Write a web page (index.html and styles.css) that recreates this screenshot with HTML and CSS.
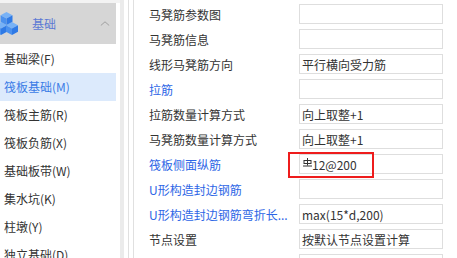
FILE: index.html
```html
<!DOCTYPE html>
<html lang="zh-CN">
<head>
<meta charset="utf-8">
<title>筏板基础</title>
<link rel="stylesheet" href="styles.css">
</head>
<body>
<div class="app">
  <aside class="sidebar">
    <div class="group-header">
      <svg class="group-icon" viewBox="0 0 18 23" aria-hidden="true">
        <g>
          <polygon class="c-top" points="1,10 7,13.2 1,16.4 -5,13.2"/>
          <polygon class="c-left" points="-5,13.2 1,16.4 1,23 -5,19.8"/>
          <polygon class="c-right" points="1,16.4 7,13.2 7,19.8 1,23"/>
        </g>
        <g>
          <polygon class="c-top" points="12,10 18,13.2 12,16.4 6,13.2"/>
          <polygon class="c-left" points="6,13.2 12,16.4 12,23 6,19.8"/>
          <polygon class="c-right" points="12,16.4 18,13.2 18,19.8 12,23"/>
        </g>
        <g>
          <polygon class="c-top" points="6.5,0 12.5,3.2 6.5,6.4 0.5,3.2"/>
          <polygon class="c-left" points="0.5,3.2 6.5,6.4 6.5,13 0.5,9.8"/>
          <polygon class="c-right" points="6.5,6.4 12.5,3.2 12.5,9.8 6.5,13"/>
        </g>
      </svg>
      <span class="group-title">基础</span>
      <svg class="chevron" viewBox="0 0 10 5" aria-hidden="true">
        <polyline points="0.8,4.5 5,0.8 9.2,4.5"/>
      </svg>
    </div>
    <ul class="nav">
      <li>基础梁(F)</li>
      <li class="active">筏板基础(M)</li>
      <li>筏板主筋(R)</li>
      <li>筏板负筋(X)</li>
      <li>基础板带(W)</li>
      <li>集水坑(K)</li>
      <li>柱墩(Y)</li>
      <li>独立基础(D)</li>
    </ul>
  </aside>
  <div class="track"></div>
  <main class="panel">
    <div class="props">
      <div class="row"><span class="label">马凳筋参数图</span><span class="value"></span></div>
      <div class="row"><span class="label">马凳筋信息</span><span class="value"></span></div>
      <div class="row"><span class="label">线形马凳筋方向</span><span class="value">平行横向受力筋</span></div>
      <div class="row"><span class="label link">拉筋</span><span class="value"></span></div>
      <div class="row"><span class="label">拉筋数量计算方式</span><span class="value">向上取整+1</span></div>
      <div class="row"><span class="label">马凳筋数量计算方式</span><span class="value">向上取整+1</span></div>
      <div class="row"><span class="label link">筏板侧面纵筋</span><span class="value"><svg class="rebar" viewBox="0 0 10 9" aria-hidden="true"><line x1="5.5" y1="0" x2="5.5" y2="7.5"/><rect x="2" y="2.5" width="7" height="3"/><line x1="1" y1="8" x2="10" y2="8"/></svg>12@200</span></div>
      <div class="row"><span class="label link">U形构造封边钢筋</span><span class="value"></span></div>
      <div class="row"><span class="label link">U形构造封边钢筋弯折长...</span><span class="value">max(15*d,200)</span></div>
      <div class="row"><span class="label">节点设置</span><span class="value">按默认节点设置计算</span></div>
      <div class="row"><span class="label"></span><span class="value"></span></div>
    </div>
  </main>
</div>
<div class="highlight"></div>
</body>
</html>
```
FILE: styles.css
```css
html, body {
  margin: 0;
  padding: 0;
}

body {
  width: 457px;
  height: 258px;
  overflow: hidden;
  position: relative;
  background: #ffffff;
  color: #333333;
  font-family: "Noto Sans CJK SC", "Noto Sans", sans-serif;
  font-size: 12px;
}

.app {
  display: flex;
  height: 258px;
  overflow: hidden;
}

.sidebar {
  flex: none;
  width: 116px;
  padding-right: 4px;
  border-top: 3px solid #f3f3f3;
}

.group-header {
  height: 41px;
  background: #d6d6d6;
  display: flex;
  align-items: center;
  padding-right: 6px;
}

.group-icon {
  flex: none;
  width: 18px;
  height: 23px;
}

.c-top { fill: #78b2f6; }
.c-left { fill: #4b91ee; }
.c-right { fill: #2f7ae6; }

.group-title {
  flex: 1;
  margin-left: 14px;
  color: #5b79d4;
  line-height: 16px;
}

.chevron {
  flex: none;
  width: 10px;
  height: 5px;
}

.chevron polyline {
  fill: none;
  stroke: #a0a0a0;
  stroke-width: 1;
}

.nav {
  list-style: none;
  margin: 1px 0 0 0;
  padding: 0;
}

.nav li {
  height: 28px;
  line-height: 28px;
  padding-left: 4px;
  white-space: nowrap;
}

.nav li.active {
  background: #dceafc;
  color: #3a7ce6;
}

.track {
  flex: none;
  width: 4px;
  background: #ebebeb;
}

.panel {
  flex: 1;
  margin-left: 4px;
  padding-left: 4px;
  border-left: 1px solid #e0e0e0;
}

.props {
  height: 100%;
  box-sizing: border-box;
  border-left: 1px solid #e0e0e0;
  padding-top: 4px;
  display: flex;
  flex-direction: column;
  gap: 5px;
  overflow: hidden;
}

.row {
  flex: none;
  display: flex;
  align-items: center;
  height: 20px;
}

.label {
  flex: none;
  width: 150px;
  padding-left: 15px;
  white-space: nowrap;
  overflow: hidden;
}

.label.link {
  color: #2d66e6;
}

.value {
  flex: none;
  width: 144px;
  height: 20px;
  box-sizing: border-box;
  border: 1px solid #dedede;
  padding-left: 2px;
  display: flex;
  align-items: center;
  white-space: nowrap;
}

.rebar {
  flex: none;
  width: 10px;
  height: 9px;
  margin-top: -3px;
}

.rebar line,
.rebar rect {
  fill: none;
  stroke: #333333;
  stroke-width: 1;
}

.highlight {
  position: absolute;
  left: 288px;
  top: 152px;
  width: 86px;
  height: 26px;
  box-sizing: border-box;
  border: 2px solid #ee1c1c;
}
```
